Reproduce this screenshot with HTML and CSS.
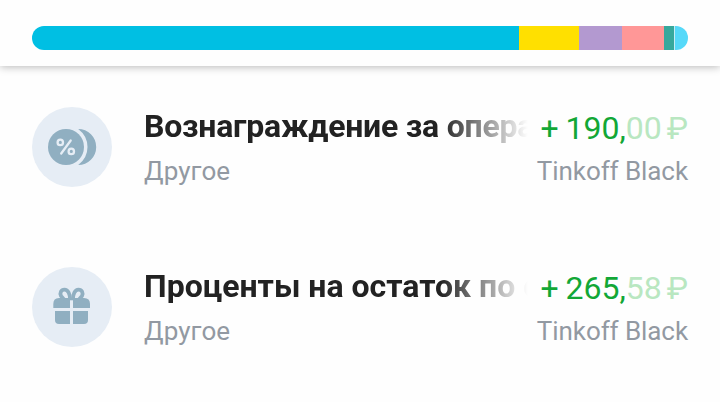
FILE: index.html
```html
<!DOCTYPE html>
<html lang="ru">
<head>
<meta charset="utf-8">
<title>Операции</title>
<link rel="stylesheet" href="styles.css">
</head>
<body>
<header class="summary">
  <div class="bar">
    <span class="segment cyan"></span>
    <span class="segment yellow"></span>
    <span class="segment purple"></span>
    <span class="segment pink"></span>
    <span class="segment teal"></span>
    <span class="segment sky"></span>
  </div>
</header>
<main class="operations">
  <article class="operation">
    <svg class="icon" viewBox="0 0 80 80" aria-hidden="true">
      <circle cx="40" cy="40" r="40" fill="#e6edf5"/>
      <circle cx="34" cy="40" r="18" fill="#90afc1"/>
      <path d="M46.2 22A18 18 0 0 1 46.2 58Q55.5 51 55.5 40Q55.5 29 46.2 22Z" fill="#90afc1"/>
      <g fill="none" stroke="#e6edf5" stroke-width="2.3">
        <circle cx="28.3" cy="35.4" r="2.7"/>
        <circle cx="39.3" cy="44.4" r="2.7"/>
        <path d="M38.7 33.5L29.2 46.5" stroke-linecap="round"/>
      </g>
    </svg>
    <div class="details">
      <h2 class="title tight">Вознаграждение за операции</h2>
      <p class="caption">Другое</p>
    </div>
    <div class="payment">
      <p class="amount"><span class="sign">+</span>190,<span class="minor">00<span class="currency">₽</span></span></p>
      <p class="caption account">Tinkoff Black</p>
    </div>
  </article>
  <article class="operation">
    <svg class="icon" viewBox="0 0 80 80" aria-hidden="true">
      <circle cx="40" cy="40" r="40" fill="#e6edf5"/>
      <g fill="#90afc1">
        <path d="M21.3 41V37Q21.3 31 27 31H38V41Z"/>
        <path d="M41 41V31H52Q58 31 58 37V41Z"/>
        <path d="M23 44H38V57H27Q23 57 23 53Z"/>
        <path d="M41 44H56V53Q56 57 52 57H41Z"/>
        <path d="M36 31H43V33.3H36Z"/>
      </g>
      <g fill="none" stroke="#90afc1" stroke-width="3.8">
        <path d="M38.2 33C38.2 27 36 22.6 32.5 22.6C29 22.6 27.6 26 29 29L32 32.5"/>
        <path d="M40.8 33C40.8 27 43 22.6 46.5 22.6C50 22.6 51.4 26 50 29L47 32.5"/>
      </g>
    </svg>
    <div class="details">
      <h2 class="title">Проценты на остаток по счету</h2>
      <p class="caption">Другое</p>
    </div>
    <div class="payment">
      <p class="amount"><span class="sign">+</span>265,<span class="minor">58<span class="currency">₽</span></span></p>
      <p class="caption account">Tinkoff Black</p>
    </div>
  </article>
</main>
</body>
</html>
```
FILE: styles.css
```css
* { box-sizing: border-box; }
body {
  margin: 0;
  height: 402px;
  overflow: hidden;
  background: #fefefe;
  font-family: Roboto, "Noto Sans", sans-serif;
}
h2, p { margin: 0; }
.summary {
  height: 66px;
  padding: 26px 32px 0;
  background: #fefefe;
  box-shadow: 0 1px 8px rgba(0, 0, 0, 0.28);
}
.bar {
  display: flex;
  height: 24px;
  border-radius: 12px;
  overflow: hidden;
}
.cyan { flex: 0 0 487px; background: #00bfe3; }
.yellow { flex: 0 0 60px; background: #ffe000; }
.purple { flex: 0 0 43px; background: #b399d0; }
.pink { flex: 0 0 42px; background: #ff9797; }
.teal { flex: 0 0 10px; background: #36a89c; }
.sky { flex: 1; background: #56d9f9; border-left: 1px solid #c5edf5; }
.operations {
  display: flex;
  flex-direction: column;
  gap: 80px;
  padding: 41px 32px 0;
}
.operation {
  display: flex;
  height: 80px;
}
.icon { flex: none; width: 80px; height: 80px; }
.details {
  flex: 1;
  min-width: 0;
  margin-left: 32px;
}
.title {
  height: 38px;
  overflow: hidden;
  color: #222;
  font-size: 32px;
  font-weight: 700;
  line-height: 38px;
  white-space: nowrap;
  -webkit-mask-image: linear-gradient(to right, #000 calc(100% - 88px), transparent);
  mask-image: linear-gradient(to right, #000 calc(100% - 88px), transparent);
}
.tight { letter-spacing: -0.22px; }
.caption {
  margin-top: 11px;
  color: #9299a2;
  font-size: 26px;
  line-height: 30px;
  letter-spacing: 0.1px;
  white-space: nowrap;
}
.account { letter-spacing: -0.08px; }
.payment {
  flex: none;
  margin-left: 9px;
  text-align: right;
}
.amount {
  height: 38px;
  color: #12a736;
  font-size: 32px;
  line-height: 42px;
  white-space: nowrap;
}
.sign { margin-right: 7px; }
.minor { color: #b9e7c1; }
.currency { margin-left: 5px; }
```
